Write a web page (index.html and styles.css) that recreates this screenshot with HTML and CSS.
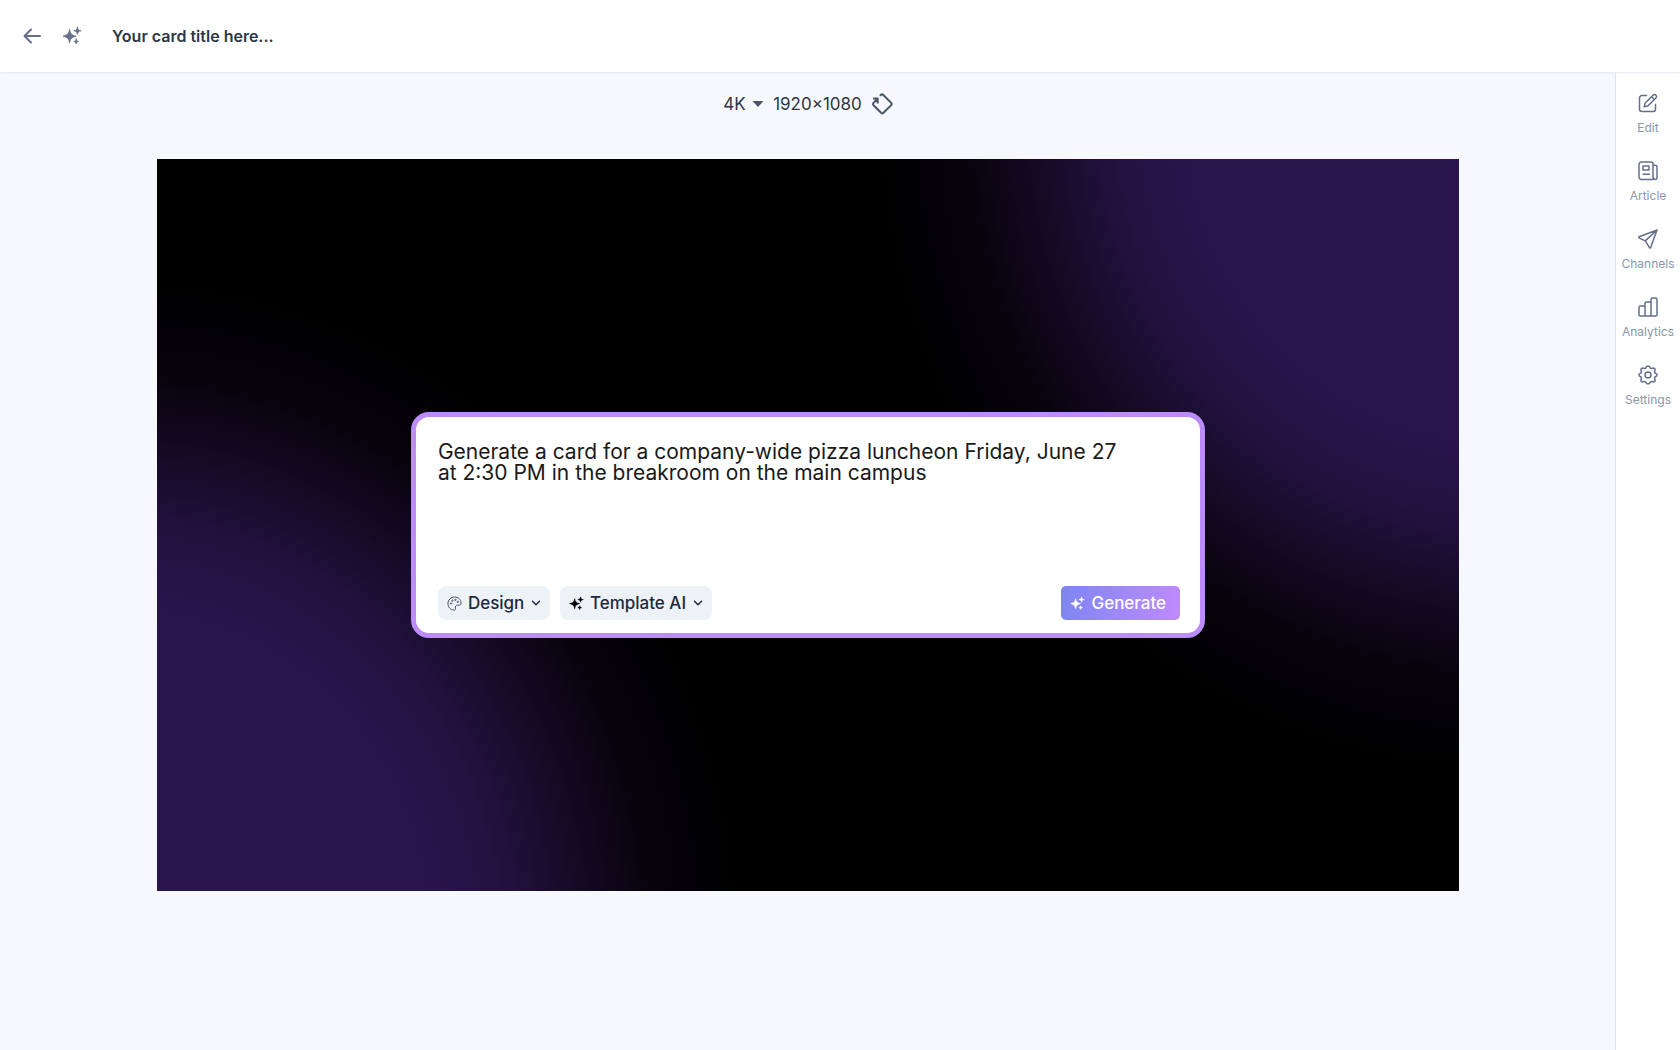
FILE: index.html
```
<!DOCTYPE html>
<html lang="en">
<head>
  <meta charset="utf-8">
  <meta name="viewport" content="width=device-width, initial-scale=1">
  <title>Card editor</title>
  <link rel="stylesheet" href="styles.css">
</head>
<body>
  <svg class="sprite" aria-hidden="true">
    <symbol id="sparkles" viewBox="0 0 20 20">
      <path d="M7.600 3.600c.8 4.300 1.900 5.400 6.400 6.600-4.500 1.200-5.600 2.300-6.400 6.800-.9-4.500-2-5.600-6.600-6.800 4.600-1.200 5.700-2.300 6.600-6.600zM15.400 1.200c.5 2.400 1.200 3.100 3.600 3.600-2.400.5-3.100 1.200-3.600 3.600-.5-2.400-1.200-3.100-3.600-3.600 2.400-.5 3.100-1.200 3.600-3.600zM14.200 13c.3 1.600.8 2.100 2.400 2.500-1.600.4-2.100.9-2.400 2.500-.3-1.600-.8-2.100-2.400-2.500 1.600-.4 2.100-.9 2.400-2.500z" fill="currentColor" stroke="currentColor" stroke-width=".8" stroke-linejoin="round"/>
    </symbol>
    <symbol id="chevron" viewBox="0 0 10 10">
      <path d="M1.500 3.200 5 6.700l3.500-3.500" fill="none" stroke="currentColor" stroke-width="1.500" stroke-linecap="round" stroke-linejoin="round"/>
    </symbol>
  </svg>

  <header class="header">
    <button class="icon-btn" type="button" aria-label="Back">
      <svg viewBox="0 0 20 20"><path d="M18 10H2.600M9 3.500 2.500 10 9 16.500" stroke-width="2"/></svg>
    </button>
    <button class="icon-btn" type="button" aria-label="Generate with AI">
      <svg><use href="#sparkles"/></svg>
    </button>
    <input class="title" type="text" aria-label="Card title" value="Your card title here...">
  </header>

  <div class="layout">
    <main class="main">
      <div class="toolbar">
        <label class="resolution">
          <select aria-label="Resolution"><option>4K</option></select>
          <svg class="caret" viewBox="0 0 12 6"><path d="M.500 0h11L6 6z"/></svg>
        </label>
        <span class="size">1920×1080</span>
        <button class="rotate" type="button" aria-label="Rotate">
          <svg viewBox="0 0 22 22"><path d="M8.800 2.800 9.700 2q1.300-1.200 2.600 0l7.900 7.900q1.100 1.100 0 2.200l-7.700 7.700q-1.200 1.100-2.400 0l-7.600-7.600q-1-1.200 0-2.300L6.300 6M2 5.600h4.700v5"/></svg>
        </button>
      </div>

      <div class="canvas">
        <form class="prompt">
          <textarea class="prompt-text" aria-label="Prompt" spellcheck="false">Generate a card for a company-wide pizza luncheon Friday, June 27 at 2:30 PM in the breakroom on the main campus</textarea>
          <div class="prompt-actions">
            <label class="chip">
              <svg class="chip-icon palette" viewBox="0 0 16 16">
                <path d="M8 1a7 7 0 0 0-7 7c0 4.200 3 7 6.500 7 1.400 0 1.900-1 1.500-2.100-.500-1.600.300-3.100 2.100-3.100h1.800C14.200 9.800 15 9 15 7.600 15 3.800 11.800 1 8 1z"/>
                <circle cx="4.300" cy="8" r=".7"/><circle cx="5.800" cy="5" r=".7"/><circle cx="9" cy="4.100" r=".7"/><circle cx="11.600" cy="6.300" r=".7"/>
              </svg>
              <select aria-label="Design"><option>Design</option></select>
              <svg class="chip-arrow"><use href="#chevron"/></svg>
            </label>
            <label class="chip">
              <svg class="chip-icon dark"><use href="#sparkles"/></svg>
              <select aria-label="Template"><option>Template AI</option></select>
              <svg class="chip-arrow"><use href="#chevron"/></svg>
            </label>
            <button class="generate" type="button">
              <svg class="chip-icon"><use href="#sparkles"/></svg>
              Generate
            </button>
          </div>
        </form>
      </div>
    </main>

    <nav class="sidebar">
      <a class="nav-item" href="#edit">
        <svg viewBox="0 0 20 20"><path d="M8.500 2.500H4A2.500 2.500 0 0 0 1.500 5v11A2.500 2.500 0 0 0 4 18.500h11a2.500 2.500 0 0 0 2.500-2.500v-4.500M7 10.300 15.300 2a2 2 0 0 1 2.800 2.800l-8.300 8.200-3.600.8zM13.600 3.800l2.700 2.700"/></svg>
        <span>Edit</span>
      </a>
      <a class="nav-item" href="#article">
        <svg viewBox="0 0 20 20"><path d="M15 18.500H3.500a2.500 2.500 0 0 1-2.500-2.500V3.500A2.500 2.500 0 0 1 3.500 1H13a2 2 0 0 1 2 2v13a2.500 2.500 0 0 0 2.500 2.500A1.800 1.800 0 0 0 19 16.700V6a1.800 1.800 0 0 0-1.800-1.800H15M5 5h6v4H5zM5 13.200h6.500"/></svg>
        <span>Article</span>
      </a>
      <a class="nav-item" href="#channels">
        <svg viewBox="0 0 20 20"><path d="M19 1 1 7.800q-.7.500 0 1.100l6.300 3 4.300 6.900q.600.700 1.100-.2zM7.300 11.900 19 1"/></svg>
        <span>Channels</span>
      </a>
      <a class="nav-item" href="#analytics">
        <svg viewBox="0 0 20 20"><path d="M7 19H2.500A1.500 1.500 0 0 1 1 17.500v-7A1.500 1.500 0 0 1 2.500 9H5.500A1.500 1.500 0 0 1 7 10.500zM7 19V6.500A1.500 1.500 0 0 1 8.500 5h3A1.500 1.500 0 0 1 13 6.500V19zM13 19V2.500A1.500 1.500 0 0 1 14.500 1h3A1.500 1.500 0 0 1 19 2.500v15a1.500 1.500 0 0 1-1.500 1.500z"/></svg>
        <span>Analytics</span>
      </a>
      <a class="nav-item" href="#settings">
        <svg viewBox="0 0 20 20"><path d="M8.400 1.700q1.600-1.400 3.200 0l.8 1.400q.700.600 1.500.4l1.600-.4q1.700.2 1.600 2l-.5 1.400q-.1.800.400 1.500l1.500.8q1 1.200 0 2.400l-1.500.8q-.5.700-.4 1.500l.5 1.400q.1 1.800-1.600 2l-1.600-.4q-.8-.2-1.500.4l-.8 1.400q-1.600 1.400-3.200 0l-.8-1.400q-.7-.6-1.500-.4l-1.600.4q-1.700-.2-1.600-2l.5-1.400q.1-.8-.4-1.500l-1.500-.8q-1-1.200 0-2.400L3 8q.5-.7.400-1.500l-.5-1.400q-.1-1.800 1.600-2l1.600.4q.8.200 1.500-.4z"/><circle cx="10" cy="10" r="3"/></svg>
        <span>Settings</span>
      </a>
    </nav>
  </div>
</body>
</html>
```

FILE: styles.css
```
* {
  box-sizing: border-box;
  margin: 0;
  padding: 0;
}

body {
  display: flex;
  flex-direction: column;
  min-height: 100vh;
  background: #f7f8fc;
  color: #2d3748;
  font-family: Inter, "Liberation Sans", sans-serif;
  font-size: 16px;
}

button,
input,
select,
textarea {
  border: 0;
  background: none;
  color: inherit;
  font: inherit;
}

button,
select {
  cursor: pointer;
}

select {
  appearance: none;
}

svg {
  display: block;
  flex: none;
}

.sprite {
  position: absolute;
  width: 0;
  height: 0;
}

/* header */
.header {
  display: flex;
  align-items: center;
  gap: 20px;
  height: 72px;
  padding: 0 22px;
  background: #fff;
  box-shadow: 0 1px 2px #e4e7ee;
  z-index: 1;
}

.icon-btn {
  color: #64708a;
}

.icon-btn svg {
  width: 20px;
  height: 20px;
  fill: none;
  stroke: currentColor;
  stroke-linecap: round;
  stroke-linejoin: round;
}

.title {
  flex: 1;
  margin-left: 10px;
  font-weight: 600;
}

/* layout */
.layout {
  display: flex;
  flex: 1;
}

.main {
  flex: 1;
  padding: 20px 156px 20px 157px;
}

.toolbar {
  display: flex;
  align-items: center;
  justify-content: center;
  gap: 9px;
  height: 24px;
  margin-bottom: 43px;
  font-size: 17px;
}

.resolution {
  display: flex;
  align-items: center;
  gap: 6px;
}

.caret {
  width: 12px;
  height: 6px;
  fill: #4a5568;
}

.rotate svg {
  width: 22px;
  height: 22px;
  fill: none;
  stroke: #4a5568;
  stroke-width: 2;
  stroke-linejoin: round;
}

/* canvas */
.canvas {
  display: flex;
  align-items: center;
  justify-content: center;
  aspect-ratio: 16 / 9;
  background:
    radial-gradient(ellipse 48% 91% at 103% -7%, #2a154d 48%, #2a154dd9 61%, #2a154d80 73%, #2a154d26 86%, #2a154d00),
    radial-gradient(ellipse 48% 91% at -3% 107%, #2a154d 48%, #2a154dd9 61%, #2a154d80 73%, #2a154d26 86%, #2a154d00),
    #000;
}

.prompt {
  display: flex;
  flex-direction: column;
  width: 61%;
  min-height: 226px;
  padding: 24px 20px 13px 22px;
  border: 5px solid #bb8cfa;
  border-radius: 18px;
  background: #fff;
}

.prompt-text {
  flex: 1;
  padding-right: 50px;
  outline: 0;
  resize: none;
  color: #1a1a1a;
  font-size: 21px;
  line-height: 21px;
}

.prompt-actions {
  display: flex;
  gap: 10px;
}

.chip,
.generate {
  display: flex;
  align-items: center;
  height: 34px;
  padding: 0 9px;
  font-size: 17px;
  font-weight: 500;
}

.chip {
  gap: 6px;
  border-radius: 8px;
  background: #edf2f7;
  color: #1f2940;
}

.chip-icon {
  width: 15px;
  height: 15px;
}

.palette {
  fill: none;
  stroke: #3f4a60;
}

.dark {
  color: #000;
}

.chip-arrow {
  width: 10px;
  height: 10px;
}

.generate {
  gap: 6px;
  margin-left: auto;
  padding: 0 14px 0 9px;
  border-radius: 5px;
  background: linear-gradient(100deg, #7c86f2, #c08afd);
  color: #fff;
}

/* sidebar */
.sidebar {
  display: flex;
  flex-direction: column;
  align-items: center;
  gap: 25px;
  width: 65px;
  padding-top: 21px;
  border-left: 1px solid #dfe3ea;
  background: #fff;
}

.nav-item {
  display: flex;
  flex-direction: column;
  align-items: center;
  gap: 7px;
  color: #8b96ab;
  font-size: 12px;
  line-height: 16px;
  text-decoration: none;
}

.nav-item svg {
  width: 20px;
  height: 20px;
  fill: none;
  stroke: #64708a;
  stroke-width: 1.5;
  stroke-linecap: round;
  stroke-linejoin: round;
}
```
